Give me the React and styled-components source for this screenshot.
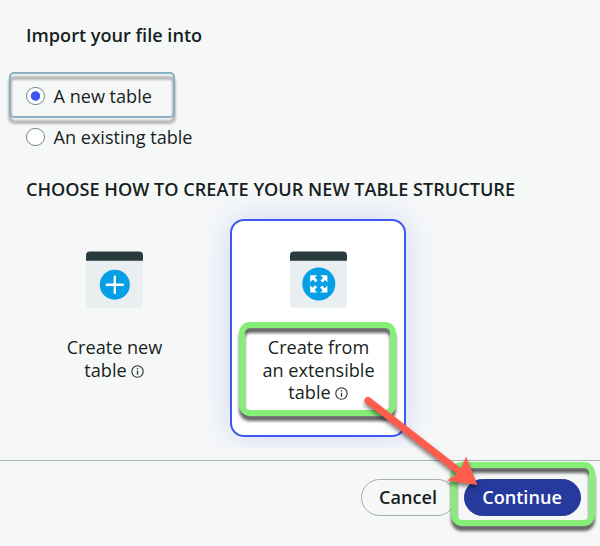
import React from "react";
import styled, { createGlobalStyle, css } from "styled-components";

const GlobalStyle = createGlobalStyle`
  * { box-sizing: border-box; }
  body {
    margin: 0;
    background: #f6f8f8;
    color: #161f21;
    font-family: "Open Sans", "Noto Sans", sans-serif;
    font-size: 18.1px;
  }
`;

const Dialog = styled.main`
  position: relative;
  width: 600px;
  height: 546px;
  overflow: hidden;
  display: flex;
  flex-direction: column;
`;

const Content = styled.section`
  height: 448px;
  padding: 23px 26px 0;
  overflow: hidden;
`;

const Heading = styled.h1`
  margin: 0;
  font-size: 18.12px;
  line-height: 25px;
  font-weight: 600;
  white-space: nowrap;
`;

const RadioGroup = styled.div`
  display: flex;
  flex-direction: column;
  align-items: flex-start;
  gap: 15px;
  margin: 35px 0 27px;
`;

const RadioRow = styled.label`
  position: relative;
  display: flex;
  align-items: center;
  gap: 9px;
  height: 26px;
  line-height: 26px;
  white-space: nowrap;
`;

const RadioDot = styled.span`
  width: 18.5px;
  height: 18.5px;
  border: 1px solid #77878b;
  border-radius: 50%;
  background: ${(p) =>
    p.$checked ? "radial-gradient(circle, #3d55ee 4.4px, #fff 5px)" : "#fff"};
`;

const Highlight = styled.span`
  position: absolute;
  pointer-events: none;
  ${(p) =>
    p.$tone === "green"
      ? css`
          border: 6px solid #85ee78;
          border-radius: 11px;
          filter: drop-shadow(0 5px 1.5px rgba(0, 0, 0, 0.6));
        `
      : css`
          border: 2px solid #8aafc0;
          border-radius: 5px;
          filter: drop-shadow(0 5px 1.5px rgba(0, 0, 0, 0.5));
        `}
`;

const RadioHighlight = styled(Highlight)`
  inset: -11px -23px -9px -17px;
`;

const CardHighlight = styled(Highlight)`
  inset: -14px -21px -12px -23px;
`;

const ButtonHighlight = styled(Highlight)`
  inset: -17px -14px -10px -13px;
`;

const Cards = styled.div`
  display: flex;
  gap: 28px;
  margin-top: 17px;
`;

const Card = styled.div`
  width: 176px;
  height: 218px;
  display: flex;
  flex-direction: column;
  align-items: center;
  padding: 30px 0 0 1px;
  border: 2px solid ${(p) => (p.$selected ? "#4059ec" : "transparent")};
  border-radius: 14px;
  ${(p) =>
    p.$selected &&
    css`
      background: #fff;
      box-shadow: 0 0 34px rgba(64, 80, 236, 0.2);
    `}
`;

const TableIcon = styled.svg`
  width: 58px;
  height: 58px;
  flex: none;
`;

const CardLabel = styled.div`
  position: relative;
  margin-top: 27px;
  line-height: 22.6px;
  text-align: center;
  white-space: nowrap;
`;

const InfoIcon = styled.svg`
  width: 13px;
  height: 13px;
  margin: 0 1px 0 4px;
  vertical-align: -1px;
`;

const Footer = styled.footer`
  height: 86px;
  margin-top: 12px;
  padding: 18px 19px 0;
  border-top: 1px solid #a9b2b5;
  display: flex;
  justify-content: flex-end;
  align-items: flex-start;
  gap: 8px;
`;

const ButtonSlot = styled.div`
  position: relative;
`;

const Button = styled.button`
  display: block;
  height: 37px;
  width: ${(p) => (p.$primary ? "117px" : "95px")};
  padding: 0 1px 0 0;
  border: 1px solid ${(p) => (p.$primary ? "#263a9e" : "#a4aeb1")};
  border-radius: 19px;
  background: ${(p) => (p.$primary ? "#263a9e" : "transparent")};
  color: ${(p) => (p.$primary ? "#fff" : "#161f21")};
  font: 600 18.1px/35px "Open Sans", "Noto Sans", sans-serif;
`;

const Arrow = styled.svg`
  position: absolute;
  left: 0;
  top: 0;
  pointer-events: none;
  filter: drop-shadow(0 3px 2px rgba(0, 0, 0, 0.5));
`;

function Info() {
  return (
    <InfoIcon viewBox="0 0 13 13" fill="none" stroke="#283133">
      <circle cx="6.5" cy="6.5" r="5.7" strokeWidth="1.1" />
      <path d="M6.5 5.7v4M6.5 3.3v1.3" strokeWidth="1.3" />
    </InfoIcon>
  );
}

function TableGlyph({ children, radius, cy }) {
  return (
    <TableIcon viewBox="0 0 58 58">
      <path d="M0 9h57v43.7a4 4 0 0 1-4 4h-49a4 4 0 0 1-4-4z" fill="#e9eef1" />
      <path d="M0 9.8V4.4a4 4 0 0 1 4-4h49a4 4 0 0 1 4 4v5.400z" fill="#293b3f" />
      <circle cx="28.8" cy={cy} r={radius} fill="#059fe5" />
      {children}
    </TableIcon>
  );
}

export default function App() {
  return (
    <Dialog>
      <GlobalStyle />
      <Content>
        <Heading>Import your file into</Heading>
        <RadioGroup>
          <RadioRow>
            <RadioDot $checked />
            A new table
            <RadioHighlight />
          </RadioRow>
          <RadioRow>
            <RadioDot />
            An existing table
          </RadioRow>
        </RadioGroup>
        <Heading>CHOOSE HOW TO CREATE YOUR NEW TABLE STRUCTURE</Heading>
        <Cards>
          <Card>
            <TableGlyph radius={15} cy={33.7}>
              <path
                d="M28.800 25.700v16M20.800 33.700h16"
                stroke="#fff"
                strokeWidth="2.4"
                strokeLinecap="round"
              />
            </TableGlyph>
            <CardLabel>
              Create new
              <br />
              table
              <Info />
            </CardLabel>
          </Card>
          <Card $selected>
            <TableGlyph radius={16.5} cy={32.9}>
              <g fill="#fff" transform="translate(-.2 -.1)">
                <path
                  id="corner"
                  d="M20.400 24.400h7l-2.300 2.300 2.600 2.600-2 2-2.600-2.600-2.700 2.700z"
                />
                <use href="#corner" transform="rotate(90 29 33)" />
                <use href="#corner" transform="rotate(180 29 33)" />
                <use href="#corner" transform="rotate(270 29 33)" />
              </g>
            </TableGlyph>
            <CardLabel>
              Create from
              <br />
              an extensible
              <br />
              table
              <Info />
              <CardHighlight $tone="green" />
            </CardLabel>
          </Card>
        </Cards>
      </Content>
      <Footer>
        <Button>Cancel</Button>
        <ButtonSlot>
          <Button $primary>Continue</Button>
          <ButtonHighlight $tone="green" />
        </ButtonSlot>
      </Footer>
      <Arrow width="600" height="546" viewBox="0 0 600 546">
        <path d="M368 400.500 462 473.500" stroke="#ff5c4d" strokeWidth="7" strokeLinecap="round" />
        <path d="M477.500 485 466 456.500 461 469 457 474 447 480.500Z" fill="#ff5c4d" />
      </Arrow>
    </Dialog>
  );
}
